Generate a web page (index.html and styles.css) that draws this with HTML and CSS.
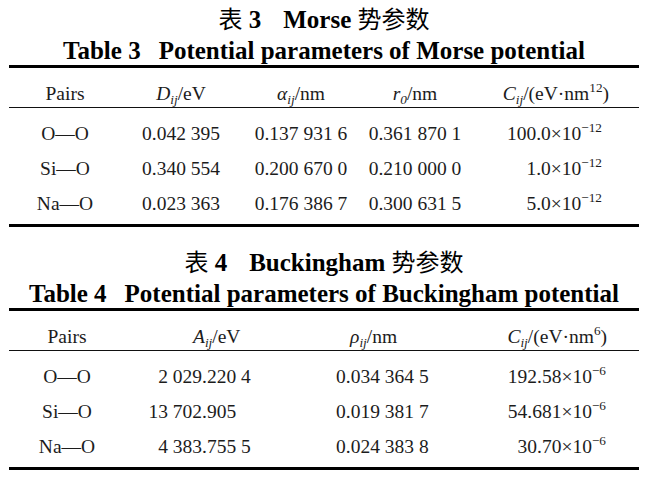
FILE: index.html
```html
<!DOCTYPE html>
<html lang="zh">
<head>
<meta charset="utf-8">
<title>Morse / Buckingham potential parameters</title>
<link rel="stylesheet" href="styles.css">
</head>
<body>
<div class="page">
  <section class="block">
    <h2 class="title-cn"><span class="cjk">表</span> 3<span class="gap"></span>Morse <span class="cjk">势参数</span></h2>
    <h3 class="title-en">Table 3<span class="gap"></span>Potential parameters of Morse potential</h3>
    <div class="rule-thick"></div>
    <div class="grid morse head">
      <div class="c">Pairs</div>
      <div class="c"><i>D</i><sub>ij</sub>/eV</div>
      <div class="c"><i>α</i><sub>ij</sub>/nm</div>
      <div class="c"><i>r</i><sub>0</sub>/nm</div>
      <div class="r h5"><i>C</i><sub>ij</sub>/(eV·nm<sup>12</sup>)</div>
    </div>
    <div class="rule-thin"></div>
    <div class="grid morse body">
      <div class="c">O—O</div>
      <div class="c">0.042 395</div>
      <div class="c">0.137 931 6</div>
      <div class="c">0.361 870 1</div>
      <div class="r d5">100.0×10<sup>−12</sup></div>

      <div class="c">Si—O</div>
      <div class="c">0.340 554</div>
      <div class="c">0.200 670 0</div>
      <div class="c">0.210 000 0</div>
      <div class="r d5">1.0×10<sup>−12</sup></div>

      <div class="c">Na—O</div>
      <div class="c">0.023 363</div>
      <div class="c">0.176 386 7</div>
      <div class="c">0.300 631 5</div>
      <div class="r d5">5.0×10<sup>−12</sup></div>
    </div>
    <div class="rule-thick"></div>
  </section>

  <section class="block">
    <h2 class="title-cn"><span class="cjk">表</span> 4<span class="gap"></span>Buckingham <span class="cjk">势参数</span></h2>
    <h3 class="title-en">Table 4<span class="gap"></span>Potential parameters of Buckingham potential</h3>
    <div class="rule-thick"></div>
    <div class="grid buck head">
      <div class="c">Pairs</div>
      <div class="l a-head"><i>A</i><sub>ij</sub>/eV</div>
      <div class="l rho-head"><i>ρ</i><sub>ij</sub>/nm</div>
      <div class="r h4"><i>C</i><sub>ij</sub>/(eV·nm<sup>6</sup>)</div>
    </div>
    <div class="rule-thin"></div>
    <div class="grid buck body">
      <div class="c">O—O</div>
      <div class="l"><span class="int">2 029</span>.220 4</div>
      <div class="l rho">0.034 364 5</div>
      <div class="r d4">192.58×10<sup>−6</sup></div>

      <div class="c">Si—O</div>
      <div class="l"><span class="int">13 702</span>.905</div>
      <div class="l rho">0.019 381 7</div>
      <div class="r d4">54.681×10<sup>−6</sup></div>

      <div class="c">Na—O</div>
      <div class="l"><span class="int">4 383</span>.755 5</div>
      <div class="l rho">0.024 383 8</div>
      <div class="r d4">30.70×10<sup>−6</sup></div>
    </div>
    <div class="rule-thick"></div>
  </section>
</div>
</body>
</html>
```

FILE: styles.css
```css
html, body {
  margin: 0;
  padding: 0;
  background: #ffffff;
}

body {
  font-family: "Liberation Serif", "Times New Roman", serif;
  color: #1c1c1c;
}

.page {
  width: 630px;
  padding: 3px 12px 0 9px;
}

.block + .block {
  margin-top: 19px;
}

.title-cn,
.title-en {
  margin: 0;
  text-align: center;
  font-weight: bold;
  font-size: 25px;
  color: #000;
  white-space: nowrap;
}

.title-cn {
  line-height: 34px;
  height: 34px;
}

.title-en {
  line-height: 28px;
  height: 28px;
}

.cjk {
  font-family: "Noto Sans CJK SC", sans-serif;
  font-weight: normal;
  font-size: 24px;
  line-height: 1;
}

.gap {
  display: inline-block;
  width: 18px;
}

.title-cn .gap {
  width: 22px;
}

.rule-thick {
  height: 3px;
  background: #000;
}

.rule-thin {
  height: 1px;
  background: #111;
}

.grid {
  display: grid;
  font-size: 19.5px;
  white-space: nowrap;
}

.morse {
  grid-template-columns: 112px 120px 120px 108px 1fr;
}

.buck {
  grid-template-columns: 116px 165px 180px 1fr;
}

.head {
  padding-top: 12px;
  line-height: 27px;
}

.body {
  padding-top: 8px;
  padding-bottom: 3px;
  line-height: 35px;
}

.c { text-align: center; }
.l { text-align: left; }
.r { text-align: right; }

.h5 { padding-right: 30px; }
.d5 { padding-right: 37px; }

.a-head { padding-left: 68px; }
.rho-head { padding-left: 60px; }
.rho { padding-left: 46px; }
.h4 { padding-right: 32px; }
.d4 { padding-right: 33px; }

.int {
  display: inline-block;
  width: 77px;
  text-align: right;
}

i {
  font-style: italic;
}

sub {
  font-size: 0.68em;
  font-style: italic;
  vertical-align: -0.28em;
  line-height: 0;
}

sup {
  font-size: 0.68em;
  vertical-align: 0.58em;
  line-height: 0;
}
```
